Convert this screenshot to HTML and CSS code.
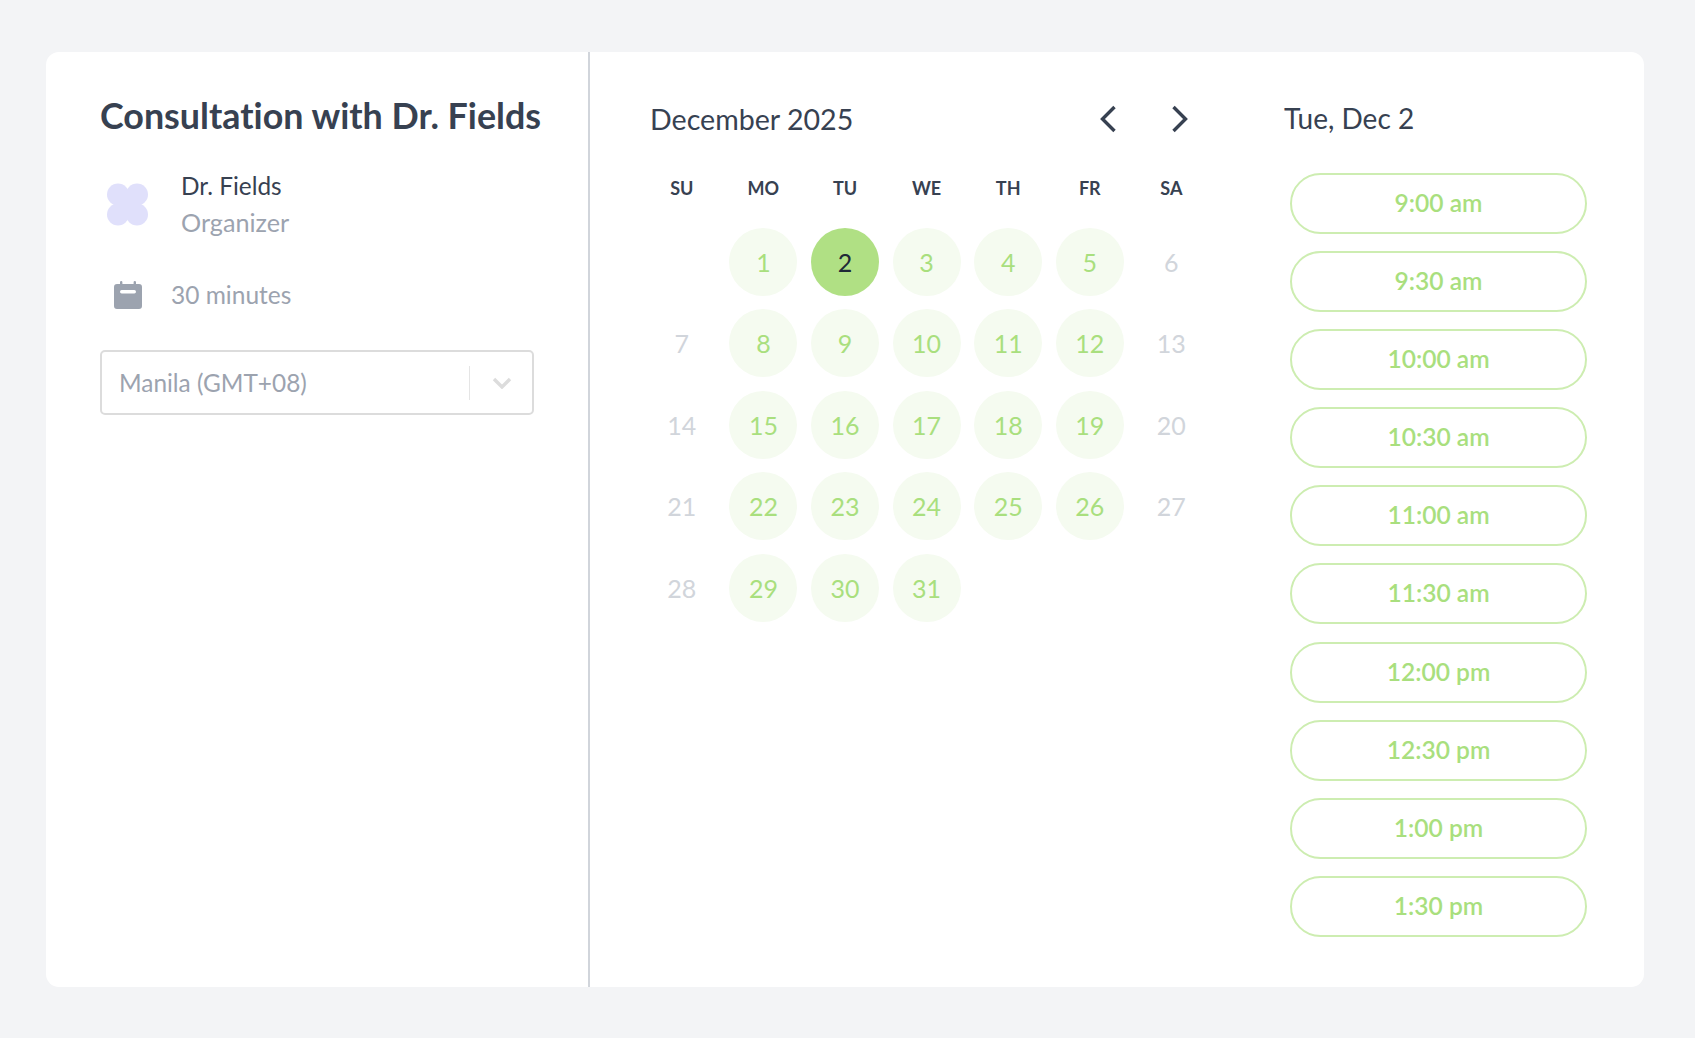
FILE: index.html
```html
<!DOCTYPE html>
<html lang="en">
<head>
    <meta charset="UTF-8">
    <meta name="viewport" content="width=device-width, initial-scale=1.0">
    <title>Consultation with Dr. Fields</title>
    <link rel="stylesheet" href="styles.css">
</head>
<body>

<div class="card">
    <div class="info">
        <h1>Consultation with Dr. Fields</h1>
        <div class="organizer">
            <svg class="clover" width="41" height="43" viewBox="0 0 41 43">
                <circle cx="11" cy="11.5" r="11"/>
                <circle cx="30" cy="11.5" r="11"/>
                <circle cx="11" cy="31.5" r="11"/>
                <circle cx="30" cy="31.5" r="11"/>
                <rect x="10" y="10" width="21" height="23"/>
            </svg>
            <div>
                <div class="organizer-name">Dr. Fields</div>
                <div class="organizer-role">Organizer</div>
            </div>
        </div>
        <div class="duration">
            <svg width="28" height="28" viewBox="0 0 28 28">
                <path fill="#9ca3af" d="M6 1.2a1.2 1.2 0 0 1 2.4 0V3h11.2V1.2a1.2 1.2 0 0 1 2.4 0V3h3a3 3 0 0 1 3 3v19a3 3 0 0 1-3 3H3a3 3 0 0 1-3-3V6a3 3 0 0 1 3-3h3z"/>
                <rect x="6" y="9" width="16" height="3.4" rx="1.7" fill="#fff"/>
            </svg>
            <span>30 minutes</span>
        </div>
        <div class="timezone">
            <span class="timezone-value">Manila (GMT+08)</span>
            <span class="timezone-sep"></span>
            <svg width="20" height="12" viewBox="0 0 20 12">
                <path d="M2 2l8 8 8-8" fill="none" stroke="#dcdcdc" stroke-width="3.4"/>
            </svg>
        </div>
    </div>

    <div class="calendar">
        <div class="month-bar">
            <span>December 2025</span>
            <div class="month-nav">
                <svg width="16" height="28" viewBox="0 0 16 28"><path d="M14.5 2L2.5 14l12 12" fill="none" stroke="#374151" stroke-width="3.4"/></svg>
                <svg width="16" height="28" viewBox="0 0 16 28"><path d="M1.5 2l12 12-12 12" fill="none" stroke="#374151" stroke-width="3.4"/></svg>
            </div>
        </div>
        <div class="weekdays">
            <span>SU</span><span>MO</span><span>TU</span><span>WE</span><span>TH</span><span>FR</span><span>SA</span>
        </div>
        <div class="days">
            <span></span>
            <span class="day open">1</span>
            <span class="day selected">2</span>
            <span class="day open">3</span>
            <span class="day open">4</span>
            <span class="day open">5</span>
            <span class="day">6</span>
            <span class="day">7</span>
            <span class="day open">8</span>
            <span class="day open">9</span>
            <span class="day open">10</span>
            <span class="day open">11</span>
            <span class="day open">12</span>
            <span class="day">13</span>
            <span class="day">14</span>
            <span class="day open">15</span>
            <span class="day open">16</span>
            <span class="day open">17</span>
            <span class="day open">18</span>
            <span class="day open">19</span>
            <span class="day">20</span>
            <span class="day">21</span>
            <span class="day open">22</span>
            <span class="day open">23</span>
            <span class="day open">24</span>
            <span class="day open">25</span>
            <span class="day open">26</span>
            <span class="day">27</span>
            <span class="day">28</span>
            <span class="day open">29</span>
            <span class="day open">30</span>
            <span class="day open">31</span>
        </div>
    </div>

    <div class="times">
        <div class="times-date">Tue, Dec 2</div>
        <div class="slots">
            <button>9:00 am</button>
            <button>9:30 am</button>
            <button>10:00 am</button>
            <button>10:30 am</button>
            <button>11:00 am</button>
            <button>11:30 am</button>
            <button>12:00 pm</button>
            <button>12:30 pm</button>
            <button>1:00 pm</button>
            <button>1:30 pm</button>
        </div>
    </div>
</div>

</body>
</html>
```

FILE: styles.css
```css
* {
    box-sizing: border-box;
}
body {
    margin: 0;
    padding: 52px 51px 51px 46px;
    background-color: #f3f4f6;
    font-family: Lato, sans-serif;
    font-variant-ligatures: none;
    color: #374151;
}
.card {
    display: flex;
    height: 935px;
    background-color: #fff;
    border-radius: 13px;
}
.info {
    width: 544px;
    padding: 44px 0 0 54px;
    border-right: 2px solid #d1d5db;
}
h1 {
    margin: 0;
    font-size: 35.85px;
    line-height: 40px;
    font-weight: 700;
}
.clover {
    fill: #e0e0fb;
}
.organizer {
    display: flex;
    align-items: center;
    gap: 33px;
    margin: 31px 0 0 7px;
}
.organizer-name, .organizer-role {
    line-height: 37px;
    font-size: 24.4px;
}
.organizer-role {
    font-size: 25.2px;
}
.organizer-role, .duration {
    color: #9ca3af;
}
.duration {
    display: flex;
    align-items: center;
    gap: 29px;
    margin: 39px 0 0 14px;
    font-size: 24.5px;
    line-height: 30px;
}
.timezone {
    display: flex;
    align-items: center;
    width: 434px;
    height: 65px;
    margin-top: 40px;
    padding-left: 17px;
    border: 2px solid #dcdcdc;
    border-radius: 5px;
    color: #9ca3af;
    font-size: 24.4px;
}
.timezone-value {
    flex: 1;
}
.timezone-sep {
    width: 1px;
    height: 34px;
    margin-right: 22px;
    background-color: #e5e5e5;
}
.timezone svg {
    margin-right: 20px;
}
.calendar {
    width: 694px;
    padding: 53px 0 0 51px;
}
.month-bar {
    display: flex;
    justify-content: space-between;
    align-items: center;
    height: 28px;
    padding-left: 9px;
    font-size: 28.6px;
}
.month-nav {
    display: flex;
    gap: 56px;
    margin-right: 96px;
}
.weekdays, .days {
    display: grid;
    grid-template-columns: repeat(7, 81.6px);
    justify-items: center;
}
.weekdays {
    margin-top: 41px;
    height: 28px;
    align-items: center;
    font-size: 18px;
    font-weight: 700;
}
.days {
    margin-top: 19px;
    grid-auto-rows: 81.5px;
    align-items: center;
}
.day {
    display: flex;
    align-items: center;
    justify-content: center;
    width: 68px;
    height: 68px;
    border-radius: 50%;
    font-size: 25px;
    color: #d1d5db;
}
.open {
    background-color: #f5fbf0;
    color: #a9df7e;
}
.selected {
    background-color: #b0e084;
    color: #1f2937;
}
.times {
    padding-top: 52px;
}
.times-date {
    height: 28px;
    line-height: 28px;
    font-size: 28px;
}
.slots {
    display: flex;
    flex-direction: column;
    gap: 17.2px;
    width: 297px;
    margin: 40.5px 0 0 6px;
}
.slots button {
    height: 61px;
    background-color: #fff;
    border: 2px solid #cdedb1;
    border-radius: 31px;
    color: #a9df7e;
    font-family: Lato, sans-serif;
    font-variant-ligatures: none;
    font-size: 24.6px;
    font-weight: 600;
    padding: 0 0 2px;
}
```
